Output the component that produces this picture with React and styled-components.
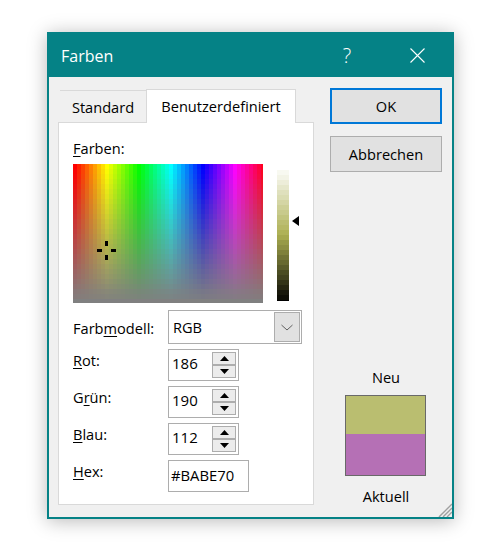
import React from "react";
import styled, { createGlobalStyle } from "styled-components";

const Global = createGlobalStyle`
  html, body { margin: 0; padding: 0; background: #fff; }
  body { font-family: "Open Sans", "Noto Sans", "Liberation Sans", sans-serif; font-size: 14.6px; color: #000; }
`;

const Page = styled.div`
  width: 493px;
  height: 549px;
  padding: 32px 0 0 47px;
  box-sizing: border-box;
  overflow: hidden;
`;
const Dialog = styled.div`
  position: relative;
  width: 407px;
  height: 487px;
  box-sizing: border-box;
  border: 2px solid #058286;
  background: #f0f0f0;
  box-shadow: 0 2px 18px rgba(0, 0, 0, 0.28);
  display: flex;
  flex-direction: column;
`;
const TitleBar = styled.div`
  height: 43px;
  background: #058286;
  color: #fff;
  display: flex;
  align-items: center;
  padding: 0 0 0 12px;
`;
const Title = styled.div`
  flex: 1;
  font-size: 16px;
`;
const HelpGlyph = styled.div`
  width: 20px;
  text-align: center;
  font-size: 20px;
  font-weight: 300;
  margin-right: 53px;
`;
const CloseIcon = styled.svg`
  width: 15px;
  height: 15px;
  margin-right: 27px;
  display: block;
`;
const Body = styled.div`
  flex: 1;
  display: flex;
  padding: 11px 0 0 9px;
`;
const LeftColumn = styled.div`
  width: 256px;
  display: flex;
  flex-direction: column;
`;
const TabStrip = styled.div`
  height: 34px;
  display: flex;
  align-items: flex-end;
  padding-left: 2px;
`;
const Tab = styled.div`
  box-sizing: border-box;
  width: ${(p) => p.$width}px;
  height: ${(p) => (p.$active ? 34 : 32)}px;
  border: 1px solid #d9d9d9;
  border-bottom: none;
  border-left-width: ${(p) => (p.$active ? 1 : 0)}px;
  border-right-width: ${(p) => (p.$active ? 1 : 0)}px;
  background: ${(p) => (p.$active ? "#fff" : "#f0f0f0")};
  display: flex;
  align-items: center;
  justify-content: center;
  position: relative;
  margin-bottom: ${(p) => (p.$active ? -1 : 0)}px;
  z-index: ${(p) => (p.$active ? 1 : 0)};
  padding-bottom: ${(p) => (p.$active ? 1 : 0)}px;
`;
const Panel = styled.div`
  box-sizing: border-box;
  width: 256px;
  height: 383px;
  background: #fff;
  border: 1px solid #d9d9d9;
  padding: 16px 0 0 14px;
`;
const FieldTitle = styled.div`
  height: 25px;
  line-height: 18px;
`;
const Key = styled.span`
  text-decoration: underline;
  text-underline-offset: 2px;
`;
const PickerRow = styled.div`
  display: flex;
  height: 139px;
  margin-bottom: 7px;
`;
const Spectrum = styled.div`
  position: relative;
  width: 190px;
  height: 139px;
`;
const Plot = styled.svg`
  display: block;
`;
const CrossTick = styled.div`
  position: absolute;
  background: #000;
  left: ${(p) => p.$x}px;
  top: ${(p) => p.$y}px;
  width: ${(p) => p.$w}px;
  height: ${(p) => p.$h}px;
`;
const LumaTrack = styled.div`
  position: relative;
  width: 12px;
  height: 136px;
  margin: 1px 0 0 14px;
`;
const LumaArrow = styled.svg`
  position: absolute;
  left: 15px;
  top: 51px;
  display: block;
`;
const FormRow = styled.div`
  display: flex;
  align-items: flex-start;
  margin-bottom: 5px;
`;
const RowLabel = styled.div`
  width: 95px;
  height: 24px;
  line-height: ${(p) => p.$line || 22}px;
`;
const Select = styled.div`
  box-sizing: border-box;
  width: 134px;
  height: 34px;
  border: 1px solid #adadad;
  padding: 1px;
  display: flex;
  align-items: center;
  justify-content: space-between;
`;
const SelectValue = styled.div`
  padding-left: 3px;
`;
const SelectButton = styled.div`
  box-sizing: border-box;
  width: 26px;
  height: 30px;
  background: #e1e1e1;
  border: 1px solid #adadad;
  display: flex;
  align-items: center;
  justify-content: center;
`;
const Spinner = styled.div`
  box-sizing: border-box;
  width: 71px;
  height: 32px;
  border: 1px solid #adadad;
  display: flex;
  justify-content: space-between;
  align-items: center;
  padding: 0 2px 0 3px;
`;
const SpinValue = styled.div`
  font-size: 15px;
  line-height: 20px;
  margin-top: -4px;
`;
const SpinButtons = styled.div`
  display: flex;
  flex-direction: column;
  width: 24px;
`;
const SpinButton = styled.div`
  box-sizing: border-box;
  height: 13px;
  background: #ececec;
  border: 1px solid #adadad;
  display: flex;
  align-items: center;
  justify-content: center;
`;
const HexField = styled.div`
  box-sizing: border-box;
  width: 81px;
  height: 32px;
  border: 1px solid #adadad;
  padding: 0 0 3px 2px;
  display: flex;
  align-items: center;
  font-size: 14.8px;
`;
const RightColumn = styled.div`
  margin-left: 16px;
  width: 112px;
  display: flex;
  flex-direction: column;
`;
const DialogButton = styled.div`
  box-sizing: border-box;
  width: 112px;
  height: 36px;
  margin-bottom: 12px;
  background: #e1e1e1;
  border: ${(p) => (p.$primary ? "2px solid #0078d7" : "1px solid #adadad")};
  display: flex;
  align-items: center;
  justify-content: center;
`;
const Preview = styled.div`
  margin-top: 184px;
  width: 112px;
  display: flex;
  flex-direction: column;
  align-items: center;
`;
const PreviewLabel = styled.div`
  height: 20px;
  line-height: 18px;
`;
const Swatches = styled.div`
  box-sizing: border-box;
  width: 81px;
  height: 81px;
  margin: 7px 0 11px -1px;
  border: 1px solid #696969;
  display: flex;
  flex-direction: column;
`;
const Swatch = styled.div`
  height: ${(p) => p.$height}px;
  background: ${(p) => p.$color};
`;
const Grip = styled.svg`
  position: absolute;
  right: 0;
  bottom: 0;
  display: block;
`;

function hsl(h, s, l) {
  return `hsl(${h} ${s}% ${l}%)`;
}

function SpectrumPlot() {
  const cells = [];
  for (let c = 0; c < 48; c++) {
    for (let r = 0; r < 28; r++) {
      cells.push(
        <rect
          key={`${c}-${r}`}
          x={c * 4}
          y={r * 5}
          width="4"
          height="5"
          fill={hsl(c * 7.5, Math.round(100 * (1 - r / 27)), 50)}
        />
      );
    }
  }
  return (
    <Plot width="190" height="139" viewBox="0 0 190 139" shapeRendering="crispEdges">
      {cells}
    </Plot>
  );
}

function LumaPlot() {
  const cells = [];
  for (let r = 0; r < 28; r++) {
    cells.push(
      <rect key={r} x="0" y={r * 5} width="12" height="5" fill={hsl(62, 37, Math.round(100 * (1 - r / 27)))} />
    );
  }
  return (
    <Plot width="12" height="136" viewBox="0 0 12 136" shapeRendering="crispEdges">
      {cells}
    </Plot>
  );
}

const UpArrow = () => (
  <svg width="9" height="5" viewBox="0 0 9 5"><polygon points="4.5,0 9,5 0,5" fill="#000" /></svg>
);
const DownArrow = () => (
  <svg width="9" height="5" viewBox="0 0 9 5"><polygon points="0,0 9,0 4.5,5" fill="#000" /></svg>
);

function SpinRow({ label, value }) {
  return (
    <FormRow>
      <RowLabel>{label}</RowLabel>
      <Spinner>
        <SpinValue>{value}</SpinValue>
        <SpinButtons>
          <SpinButton><UpArrow /></SpinButton>
          <SpinButton><DownArrow /></SpinButton>
        </SpinButtons>
      </Spinner>
    </FormRow>
  );
}

export default function App() {
  return (
    <Page>
      <Global />
      <Dialog>
        <TitleBar>
          <Title>Farben</Title>
          <HelpGlyph>?</HelpGlyph>
          <CloseIcon viewBox="0 0 15 15">
            <path d="M0.5 0.5L14.5 14.5M14.5 0.5L0.5 14.5" stroke="#fff" strokeWidth="1.1" fill="none" />
          </CloseIcon>
        </TitleBar>
        <Body>
          <LeftColumn>
            <TabStrip>
              <Tab $width={86}>Standard</Tab>
              <Tab $active $width={150}>Benutzerdefiniert</Tab>
            </TabStrip>
            <Panel>
              <FieldTitle><Key>F</Key>arben:</FieldTitle>
              <PickerRow>
                <Spectrum>
                  <SpectrumPlot />
                  <CrossTick $x={32} $y={77} $w={3} $h={5} />
                  <CrossTick $x={32} $y={91} $w={3} $h={5} />
                  <CrossTick $x={24} $y={85} $w={5} $h={3} />
                  <CrossTick $x={38} $y={85} $w={5} $h={3} />
                </Spectrum>
                <LumaTrack>
                  <LumaPlot />
                  <LumaArrow width="8" height="10" viewBox="0 0 8 10">
                    <polygon points="0,5 7,0 7,10" fill="#000" />
                  </LumaArrow>
                </LumaTrack>
              </PickerRow>
              <FormRow>
                <RowLabel $line={36}>Farb<Key>m</Key>odell:</RowLabel>
                <Select>
                  <SelectValue>RGB</SelectValue>
                  <SelectButton>
                    <svg width="12" height="7" viewBox="0 0 12 7">
                      <path d="M0.5 1L6 6L11.5 1" stroke="#606060" strokeWidth="1" fill="none" />
                    </svg>
                  </SelectButton>
                </Select>
              </FormRow>
              <SpinRow label={<><Key>R</Key>ot:</>} value="186" />
              <SpinRow label={<>G<Key>r</Key>ün:</>} value="190" />
              <SpinRow label={<><Key>B</Key>lau:</>} value="112" />
              <FormRow>
                <RowLabel><Key>H</Key>ex:</RowLabel>
                <HexField>#BABE70</HexField>
              </FormRow>
            </Panel>
          </LeftColumn>
          <RightColumn>
            <DialogButton $primary>OK</DialogButton>
            <DialogButton>Abbrechen</DialogButton>
            <Preview>
              <PreviewLabel>Neu</PreviewLabel>
              <Swatches>
                <Swatch $color="#babe70" $height={38} />
                <Swatch $color="#b570b5" $height={41} />
              </Swatches>
              <PreviewLabel>Aktuell</PreviewLabel>
            </Preview>
          </RightColumn>
        </Body>
        <Grip width="14" height="14" viewBox="0 0 14 14">
          <path d="M14 1L1 14M14 5L5 14M14 9L9 14" stroke="#a0a0a0" strokeWidth="1.4" fill="none" />
        </Grip>
      </Dialog>
    </Page>
  );
}
